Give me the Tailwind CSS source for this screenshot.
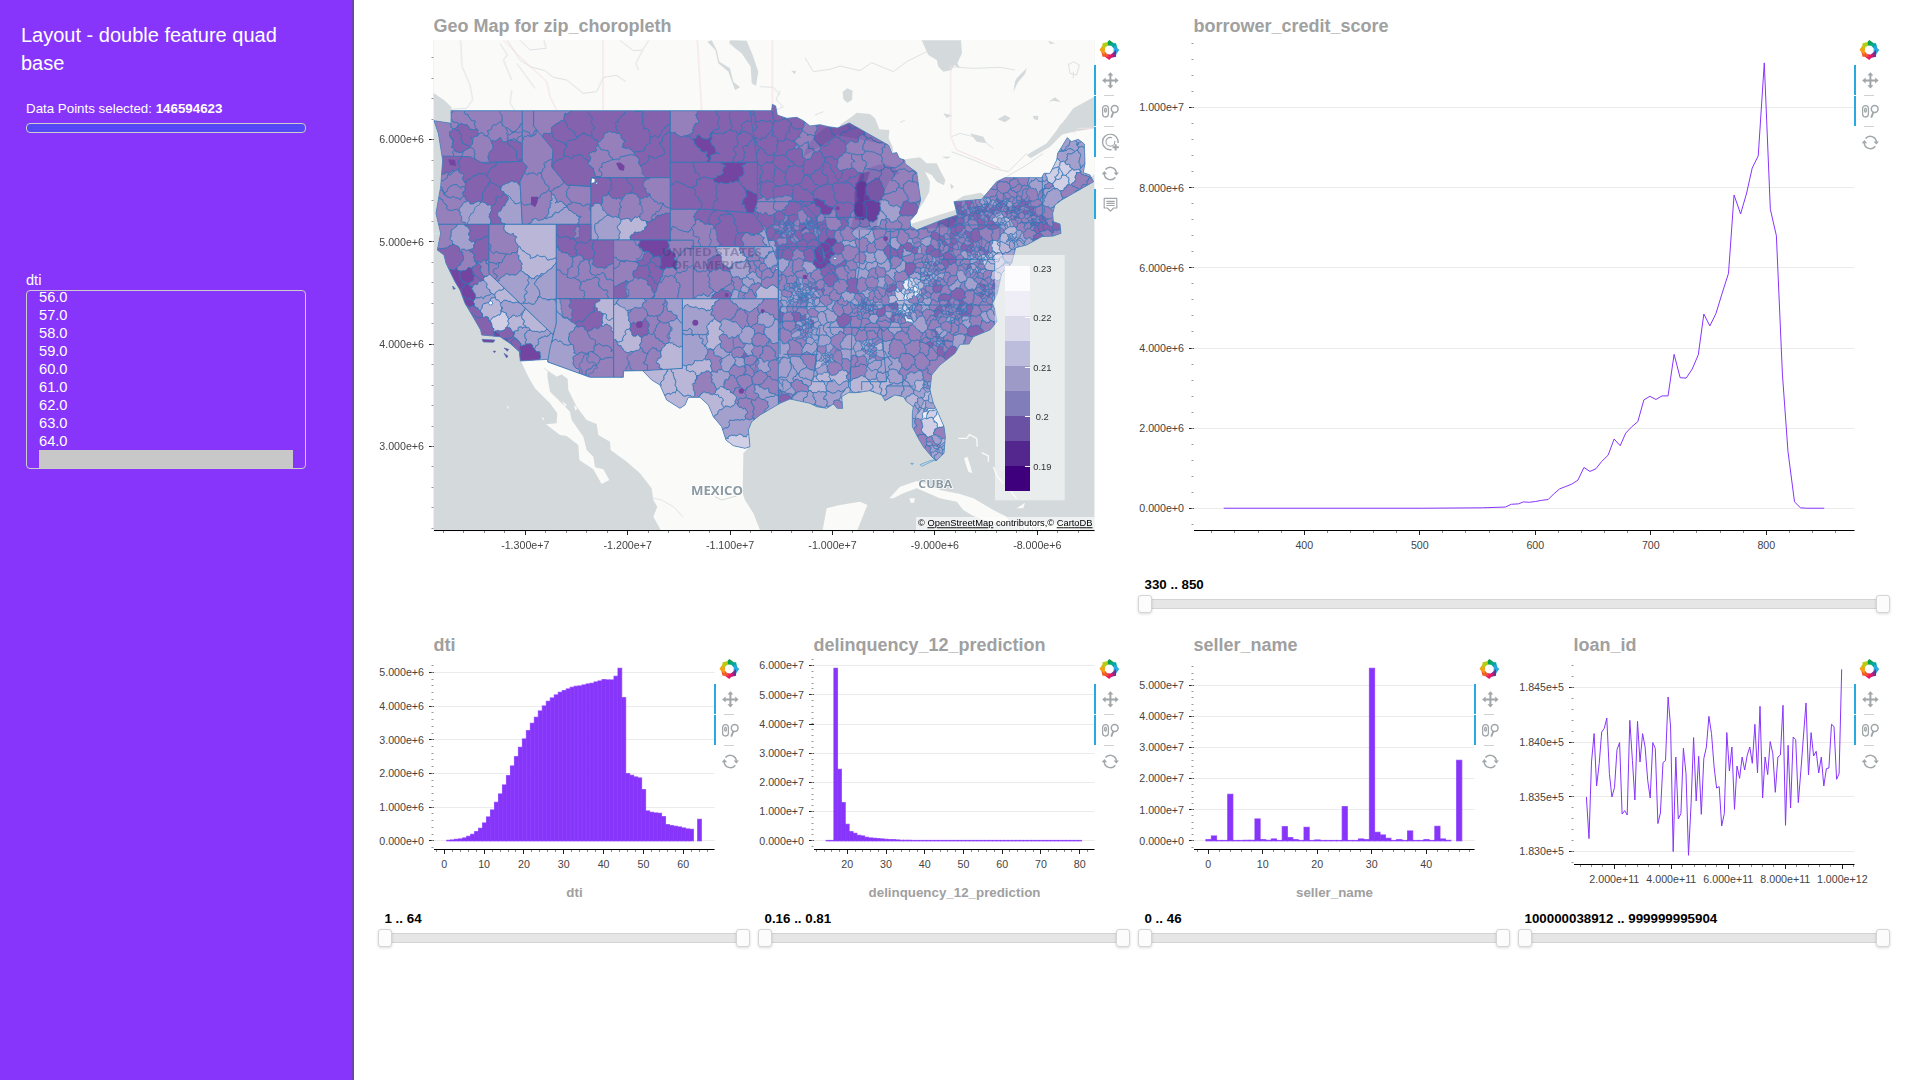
<!DOCTYPE html>
<html lang="en">
<head>
<meta charset="utf-8">
<title>Layout - double feature quad base</title>
<script src="https://cdn.jsdelivr.net/npm/@tailwindcss/browser@4"></script>
</head>
<body class="h-screen w-screen overflow-hidden bg-white font-['Liberation_Sans',Arial,sans-serif]">
<svg class="hidden">
  <symbol id="i-logo" viewBox="-10 -10 20 20">
    <path d="M-4.8-4.8 0-10 4.8-6.6 2-4.2Z" fill="#0aa14b"/>
    <path transform="rotate(45)" d="M-4.8-4.8 0-9.6 4.8-6.6 2-4.2Z" fill="#00a99d"/>
    <path transform="rotate(90)" d="M-4.8-4.8 0-10 4.8-6.6 2-4.2Z" fill="#26aae1"/>
    <path transform="rotate(135)" d="M-4.8-4.8 0-9.6 4.8-6.6 2-4.2Z" fill="#7b2d8e"/>
    <path transform="rotate(180)" d="M-4.8-4.8 0-10 4.8-6.6 2-4.2Z" fill="#ed1566"/>
    <path transform="rotate(225)" d="M-4.8-4.8 0-9.6 4.8-6.6 2-4.2Z" fill="#f15a29"/>
    <path transform="rotate(270)" d="M-4.8-4.8 0-10 4.8-6.6 2-4.2Z" fill="#fb9d14"/>
    <path transform="rotate(315)" d="M-4.8-4.8 0-9.6 4.8-6.6 2-4.2Z" fill="#b5cc12"/>
  </symbol>
  <symbol id="i-pan" viewBox="0 0 18 18">
    <path fill="#a1a6a9" d="M9 .8 12 4.2H10V8H13.8V6L17.2 9 13.8 12V10H10V13.8H12L9 17.2 6 13.8H8V10H4.2V12L.8 9 4.2 6V8H8V4.2H6Z"/>
  </symbol>
  <symbol id="i-wheel" viewBox="0 0 18 18">
    <g fill="none" stroke="#a1a6a9" stroke-width="1.3">
      <rect x="1.2" y="3.2" width="5.8" height="11.4" rx="2.9"/>
      <ellipse cx="4.1" cy="7.8" rx=".9" ry="2"/>
      <circle cx="13.3" cy="6.6" r="3.4" stroke-width="1.5"/>
      <path d="M12 9.8 9.8 15.2" stroke-width="1.9"/>
    </g>
  </symbol>
  <symbol id="i-select" viewBox="0 0 18 18">
    <g fill="none" stroke="#a1a6a9">
      <path d="M10.2 16.2A7.8 7.8 0 1 1 16.6 9.6" stroke-width="1.4"/>
      <circle cx="9" cy="8.4" r="4.4" stroke-width="1.1" stroke-dasharray="22 4" />
      <path d="M14.2 10.8V17M11.1 13.9H17.4" stroke-width="2"/>
    </g>
  </symbol>
  <symbol id="i-reset" viewBox="0 0 18 18">
    <g fill="none" stroke="#a1a6a9" stroke-width="1.5">
      <path d="M4.1 5.2A6.2 6.2 0 0 1 15 8.4"/>
      <path d="M13.9 12.8A6.2 6.2 0 0 1 2.8 9.6"/>
    </g>
    <path fill="#a1a6a9" d="M12.2 8H17.6L14.9 11.2ZM.3 9.8H5.7L3 6.6Z"/>
  </symbol>
  <symbol id="i-hover" viewBox="0 0 18 18">
    <g fill="none" stroke="#a1a6a9" stroke-width="1.2">
      <path d="M2.8 3H15.4V12.6H12.2L9.1 15.8 6 12.6H2.8Z" stroke-linejoin="round"/>
      <path d="M5 5.9H13.3M5 8H13.3M5 10.1H13.3"/>
    </g>
  </symbol>
</svg>

<div class="flex h-full">
  <aside class="flex w-[354px] shrink-0 flex-col border-r-2 border-[#6d45ac] bg-[#8735fb] text-white">
    <h1 class="ml-[21px] mt-[21px] w-[280px] text-[20px] leading-7">Layout - double feature quad base</h1>
    <div class="ml-[26px] mt-[24px] w-[280px]">
      <p class="h-[22px] text-[13.33px] leading-4">Data Points selected: <b>146594623</b></p>
      <div class="h-[10px] rounded-[4px] border border-[#ccc] bg-[#5546f6]"></div>
    </div>
    <div class="ml-[26px] mt-[138px] w-[280px]">
      <p class="h-[19px] text-[14.6px] leading-[18px]">dti</p>
      <div class="flex h-[179px] flex-col justify-end overflow-hidden rounded-[4px] border border-[#ccc] px-3 text-[14.67px] leading-[18px]" id="options">
      </div>
    </div>
  </aside>

  <main class="flex grow flex-col pl-4">
    <section class="flex h-[619px]">
      <article class="flex w-[760px] flex-col">
        <h2 class="h-10 pl-[63.5px] pt-4 text-[18px] leading-5 font-bold text-[#a0a0a0]">Geo Map for zip_choropleth</h2>
        <div class="flex">
          <svg id="map" class="h-[520px] w-[725px] shrink-0 overflow-visible" viewBox="370 40 725 520"></svg>
          <div data-tools="pan,wheel,select,reset-,hover"></div>
        </div>
      </article>
      <article class="flex w-[760px] flex-col">
        <h2 class="h-10 pl-[63.5px] pt-4 text-[18px] leading-5 font-bold text-[#a0a0a0]">borrower_credit_score</h2>
        <div class="flex h-[537px]">
          <svg id="score" class="h-[520px] w-[725px] shrink-0 overflow-visible" viewBox="1130 40 725 520"></svg>
          <div data-tools="pan,wheel,reset-"></div>
        </div>
        <div data-slider="330 .. 850"></div>
      </article>
    </section>
    <section class="flex">
      <article class="flex w-[380px] flex-col">
        <h2 class="h-10 pl-[63.5px] pt-4 text-[18px] leading-5 font-bold text-[#a0a0a0]">dti</h2>
        <div class="flex h-[252px]">
          <svg id="dti" class="h-[250px] w-[345px] shrink-0 overflow-visible" viewBox="370 659 345 250"></svg>
          <div data-tools="pan,wheel,reset-"></div>
        </div>
        <div data-slider="1 .. 64"></div>
      </article>
      <article class="flex w-[380px] flex-col">
        <h2 class="h-10 pl-[63.5px] pt-4 text-[18px] leading-5 font-bold text-[#a0a0a0]">delinquency_12_prediction</h2>
        <div class="flex h-[252px]">
          <svg id="delinquency" class="h-[250px] w-[345px] shrink-0 overflow-visible" viewBox="750 659 345 250"></svg>
          <div data-tools="pan,wheel,reset-"></div>
        </div>
        <div data-slider="0.16 .. 0.81"></div>
      </article>
      <article class="flex w-[380px] flex-col">
        <h2 class="h-10 pl-[63.5px] pt-4 text-[18px] leading-5 font-bold text-[#a0a0a0]">seller_name</h2>
        <div class="flex h-[252px]">
          <svg id="seller" class="h-[250px] w-[345px] shrink-0 overflow-visible" viewBox="1130 659 345 250"></svg>
          <div data-tools="pan,wheel,reset-"></div>
        </div>
        <div data-slider="0 .. 46"></div>
      </article>
      <article class="flex w-[380px] flex-col">
        <h2 class="h-10 pl-[63.5px] pt-4 text-[18px] leading-5 font-bold text-[#a0a0a0]">loan_id</h2>
        <div class="flex h-[252px]">
          <svg id="loan" class="h-[250px] w-[345px] shrink-0 overflow-visible" viewBox="1510 659 345 250"></svg>
          <div data-tools="pan,wheel,reset-"></div>
        </div>
        <div data-slider="100000038912 .. 999999995904"></div>
      </article>
    </section>
  </main>
</div>

<script>
// ---- sidebar list ----
const opts = [];
for (let v = 56; v <= 64; v++) opts.push(`<div class="h-[18px] shrink-0">${v}.0</div>`);
opts.push('<div class="h-[18px] shrink-0 bg-[#c8c8c8]"></div>');
document.getElementById('options').innerHTML = opts.join('');

// ---- toolbars and sliders ----
document.querySelectorAll('[data-tools]').forEach(el => {
  el.className = 'relative z-10 -ml-px flex w-8 shrink-0 flex-col';
  let h = '<svg class="mb-[5px] ml-[5px] h-5 w-5 overflow-visible"><use href="#i-logo" x=".3"/></svg>';
  el.dataset.tools.split(',').forEach((t, i) => {
    const off = t.endsWith('-');
    h += (i ? '<div class="ml-[10px] h-px w-[10px] bg-[#d0d0d0]"></div>' : '') +
      `<div class="flex h-[30px] items-center border-l-2 pl-[5px] ${off ? 'border-transparent' : 'border-[#26aae1]'}"><svg class="h-[18px] w-[18px] overflow-visible"><use href="#i-${t.replace('-', '')}" x=".4" y=".4"/></svg></div>`;
  });
  el.innerHTML = h;
});
document.querySelectorAll('[data-slider]').forEach(el => {
  el.className = 'ml-[14.5px] mr-[7px]';
  const handle = '<div class="-mx-[8px] h-[18px] w-[14px] rounded-[3px] border border-[#d5d5d5] bg-[#fcfcfc] shadow-[0_1px_3px_rgba(0,0,0,0.15)]"></div>';
  el.innerHTML = `<p class="h-[18px] text-[13.33px] leading-4 font-bold text-black">${el.dataset.slider}</p>
    <div class="mt-1 flex h-[10px] items-center justify-between border border-[#d3d3d3] bg-[#e6e6e6]">${handle}${handle}</div>`;
});

// ---- axes ----
function axes(o) {
  let s = '';
  const L = o.left, R = o.right, B = o.bottom;
  o.y.forEach(([t, y]) => {
    if (o.grid) s += `<path d="M${L} ${Math.round(y)}.5H${R}" stroke="#ebebeb"/>`;
    s += `<path d="M${L - 5} ${Math.round(y)}.5H${L}" stroke="#222"/><text x="${L - 10}" y="${y + 4.3}" text-anchor="end">${t}</text>`;
  });
  for (let y = o.y[0][1] + o.ym * 30; y > o.top; y -= o.ym)
    if (y < B) s += `<path d="M${L - 2.5} ${Math.round(y)}.5H${L - .5}" stroke="#999"/>`;
  for (let x = o.x[0][1] - o.xm * 30; x < R; x += o.xm)
    if (x > L) s += `<path d="M${Math.floor(x) + .5} ${B}v2.5" stroke="#888"/>`;
  o.x.forEach(([t, x]) => { s += `<path d="M${Math.floor(x) + .5} ${B}v4.5" stroke="#222"/><text x="${x}" y="${B + 18}" text-anchor="middle">${t}</text>`; });
  s += `<path d="M${L} ${B}H${R}" stroke="#000"/>`;
  return `<g fill="#444" font-size="10.67">${s}</g>`;
}
const ticks = (names, a, d) => names.map((n, i) => [n, a + d * i]);

// line chart: borrower credit score
const score = '186,1284 580,1284 700,1283 745,1281 757,1274 771,1273 781,1268 793,1269 805,1267 817,1264 830,1262 841,1248 853,1235 865,1229 877,1223 889,1213 901,1181 913,1191 925,1184 936,1166 949,1150 961,1109 973,1126 984,1094 996,1078 1008,1065 1020,1010 1032,1001 1044,1009 1056,1000 1068,1000 1080,895 1092,954 1104,955 1116,932 1128,896 1139,793 1151,823 1163,792 1175,742 1188,690 1199,492 1212,540 1224,487 1235,424 1247,393 1259,158 1271,528 1283,595 1295,945 1306,1140 1319,1268 1331,1283 1343,1284 1378,1284';
document.getElementById('score').innerHTML = axes({ left: 1194, right: 1854.5, top: 42, bottom: 530.5, grid: 1,
  y: ticks(['0.000e+0', '2.000e+6', '4.000e+6', '6.000e+6', '8.000e+6', '1.000e+7'], 507.8, -80.15), ym: 16.03,
  x: ticks(['400', '500', '600', '700', '800'], 1304.3, 115.5), xm: 23.1 }) +
  `<polyline fill="none" stroke="#8735fb" transform="translate(1130 .4) scale(.5038 .3955)" vector-effect="non-scaling-stroke" points="${score}"/>`;

// line chart: loan id
const loan = [500,625,395,310,467,400,305,294,263,430,500,472,358,337,551,541,554,270,390,509,273,395,310,350,450,503,337,355,580,548,397,391,200,290,664,380,566,550,354,430,675,520,322,512,378,552,385,350,258,310,410,473,469,587,550,307,422,350,537,407,444,380,419,375,350,399,282,428,228,503,380,433,334,370,486,380,374,225,585,345,533,320,328,517,420,320,218,434,307,377,363,428,380,467,415,413,282,289,447,430,117];
document.getElementById('loan').innerHTML = axes({ left: 1574, right: 1854.5, top: 664, bottom: 864.5, grid: 1,
  y: ticks(['1.830e+5', '1.835e+5', '1.840e+5', '1.845e+5'], 851, -54.67), ym: 10.93,
  x: ticks(['2.000e+11', '4.000e+11', '6.000e+11', '8.000e+11', '1.000e+12'], 1614.3, 57), xm: 11.4 }) +
  `<polyline fill="none" stroke="#8735fb" points="${loan.map((y, i) => (1586.4 + i * 2.553).toFixed(1) + ',' + (630.3 + y / 3).toFixed(1)).join(' ')}"/>`;

// bar charts; heights are in thirds of a pixel
function bars(id, o, vals, x0, w, label) {
  let s = '';
  for (const k in vals) {
    const h = Math.max(vals[k], 1.5) / 3;
    s += `<rect x="${(x0 + k * w - w / 2 + .1).toFixed(2)}" y="${(840.9 - h).toFixed(2)}" width="${(w - .2).toFixed(2)}" height="${h.toFixed(2)}"/>`;
  }
  document.getElementById(id).innerHTML = axes(o) + `<g fill="#8735fb" stroke="#8735fb" stroke-opacity=".75">${s}</g>` +
    `<text x="${o.left + 140.5}" y="897" text-anchor="middle" font-size="13.33" font-weight="bold" fill="#a0a0a0">${label}</text>`;
}
const dti = {};
[2,3,5,6,9,14,20,28,38,54,72,93,116,141,168,196,225,253,281,306,331,353,371,390,405,419,429,438,446,451,456,461,464,465,468,471,473,477,480,484,483,483,494,518,430,202,197,192,189,154,90,86,84,83,73,49,46,44,42,39,36,35].forEach((v, i) => dti[i + 1] = v);
dti[64] = 65;
bars('dti', { left: 434, right: 714.5, top: 665, bottom: 849.5, grid: 1, y: ticks(['0.000e+0', '1.000e+6', '2.000e+6', '3.000e+6', '4.000e+6', '5.000e+6'], 840.3, -33.67), ym: 6.734,
  x: ticks(['0', '10', '20', '30', '40', '50', '60'], 444.3, 39.83), xm: 7.966 }, dti, 444.6, 3.983, 'dti');
const del = {};
for (let i = 15; i <= 80; i++) del[i] = 1;
[518,215,115,50,28,23,17,15,11,9,8,7,6,5,4,4,3,2,2,2].forEach((v, i) => del[17 + i] = v);
bars('delinquency', { left: 814, right: 1094.5, top: 659, bottom: 849.5, grid: 1, y: ticks(['0.000e+0', '1.000e+7', '2.000e+7', '3.000e+7', '4.000e+7', '5.000e+7', '6.000e+7'], 840.3, -29.2), ym: 5.84,
  x: ticks(['20', '30', '40', '50', '60', '70', '80'], 847.3, 38.73), xm: 7.746 }, del, 769.87, 3.873, 'delinquency_12_prediction');
const sel = {};
[4,15,1,1,140,1,1,2,2,66,4,2,6,1,43,10,4,1,41,1,3,1,1,1,1,103,1,1,6,4,518,26,18,8,1,4,1,30,1,1,4,1,44,6,2].forEach((v, i) => sel[i] = v);
sel[46] = 242;
bars('seller', { left: 1194, right: 1474.5, top: 661, bottom: 849.5, grid: 1, y: ticks(['0.000e+0', '1.000e+7', '2.000e+7', '3.000e+7', '4.000e+7', '5.000e+7'], 840.3, -31.07), ym: 6.214,
  x: ticks(['0', '10', '20', '30', '40'], 1208.3, 54.5), xm: 10.9 }, sel, 1208.5, 5.45, 'seller_name');

// ---- choropleth map; map units are thirds of a pixel from x = 420 ----
let seed = 7;
const rnd = () => { seed = (seed * 1664525 + 1013904223) >>> 0; return seed / 4294967296; };
const FILL = ['#7345a0', '#8562ad', '#9580bc', '#a3a0cd', '#bab6d8', '#d0cfe6', '#ecedf6'];
const LINE = '#2f78b8';
const shift = (s, dx, dy) => s.trim().split(/\s+/).map(p => { const [x, y] = p.split(',').map(Number); return [x + dx, y + dy]; });
const US = [
  ...shift('93,332 1055,332 1057,313 1067,318 1072,345', 0, 0),
  ...shift('80,355 110,352 130,362 150,378 180,374 205,380 232,384 268,369 386,436 396,460 410,458 418,475 434,480 436,492 470,517 476,560 482,600 470,640 450,662 452,678 470,690 540,662 592,645 582,605 665,598 710,545 735,533 845,533 852,520 870,520 890,480 893,460 922,413 934,425 955,418 973,432 975,490 970,518 990,525 1001,545 975,560 940,580 905,600 885,615 878,640 880,665 900,672 903,700 880,708 845,710 800,735 767,743 755,790 725,820 712,880 700,905', 1020, 0),
  ...shift('697,70 705,90 711,125 690,150 665,160 640,170 627,192 600,193 585,220 540,255 515,285 510,330 520,370 535,400 552,440 556,470 552,520 528,543 515,530 490,500 475,475 457,440 457,400 460,380 440,365 430,350 405,345 375,362 365,345 330,332 290,338 265,338 245,350 248,385 232,385 220,372 200,385 170,380 150,370 90,357 60,370 0,405', 1020, 840),
  ...shift('995,425 985,450 990,500 975,505 940,497 918,480 905,440 880,410 865,375 840,352 805,352 795,375 780,385 740,360 720,315 695,300 668,272 611,273 610,292 510,292 383,246 383,238 301,243 298,215 270,190 240,170 185,165 182,150 150,95 135,70 120,30 105,5', 0, 840),
  ...shift('95,825 78,790 72,765 52,750 62,700 48,640 62,560 68,480 55,400 42,362 93,370', 0, 0)
];
function hash(a, b, c, d) { let h = (Math.round(a) * 73856093) ^ (Math.round(b) * 19349663) ^ (Math.round(c) * 83492791) ^ (Math.round(d) * 2654435); h = Math.imul(h ^ (h >>> 13), 1274126177); return (((h ^ (h >>> 16)) >>> 0) / 4294967296) * 2 - 1; }
// roughen an edge the same way from whichever side it is walked
function jag(p, q, out) {
  const dx = q[0] - p[0], dy = q[1] - p[1], l = Math.hypot(dx, dy);
  if (l < 6 || l > 400) { out.push(q); return; }
  const sw = p[0] > q[0], a = sw ? q : p, b = sw ? p : q;
  const k = hash(a[0], a[1], b[0], b[1]) * .3 * (sw ? -1 : 1);
  const m = [(p[0] + q[0]) / 2 - dy * k, (p[1] + q[1]) / 2 + dx * k];
  jag(p, m, out); jag(m, q, out);
}
function cells(seeds, box) {
  let out = '';
  seeds.forEach(s => {
    let poly = [[box[0], box[1]], [box[2], box[1]], [box[2], box[3]], [box[0], box[3]]];
    const near = [];
    seeds.forEach(t => { if (t !== s) { const d = (t[0] - s[0]) ** 2 + (t[1] - s[1]) ** 2; if (d > .1) near.push([d, t]); } });
    near.sort((a, b) => a[0] - b[0]);
    for (const [d, t] of near) {
      let r = 0; poly.forEach(p => r = Math.max(r, (p[0] - s[0]) ** 2 + (p[1] - s[1]) ** 2));
      if (d > 4 * r) break;
      const mx = (s[0] + t[0]) / 2, my = (s[1] + t[1]) / 2, nx = t[0] - s[0], ny = t[1] - s[1], np = [];
      poly.forEach((p, i) => {
        const q = poly[(i + 1) % poly.length];
        const a = (p[0] - mx) * nx + (p[1] - my) * ny, b = (q[0] - mx) * nx + (q[1] - my) * ny;
        if (a <= 0) np.push(p);
        if (a * b < 0) { const k = a / (a - b); np.push([p[0] + (q[0] - p[0]) * k, p[1] + (q[1] - p[1]) * k]); }
      });
      poly = np;
    }
    poly = poly.map(p => [Math.round(p[0] * 4) / 4 + .01, Math.round(p[1] * 4) / 4 + .01]);
    const pts = [];
    poly.forEach((p, i) => jag(p, poly[(i + 1) % poly.length], pts));
    out += `<path fill="${FILL[s[2]]}"${s[3] ? ' stroke-width="1.8"' : ''} d="M${pts.map(p => p[0].toFixed(1) + ' ' + p[1].toFixed(1)).join('L')}Z"/>`;
  });
  return out;
}
const anchors = [[1050,380,1],[1140,400,1.6],[1200,430,1],[1340,460,2],[1250,430,1],[1240,550,1],[1220,610,.4],[1330,590,.8],[1100,540,1],[1080,640,1.5],[1190,680,1.3],[1400,520,2],[1460,600,2],[1420,640,2.5],[1300,730,2.2],[1190,760,1],[1150,800,2],[1100,850,2.4],[1250,820,1.6],[1370,760,2.4],[1450,760,2],[1600,730,1.5],[1560,850,2],[1480,868,5],[1450,892,5],[1420,850,2.2],[1450,840,2.2],[1520,845,2.2],[1500,905,2.4],[1700,700,1.6],[1800,650,1.6],[1760,580,2],[1880,560,2.6],[1910,480,5],[1960,450,3],[1980,550,2.2],[1765,690,3.4],[1650,820,2.2],[1700,880,1.8],[1740,800,4.2],[1620,930,1.8],[1680,930,2.6],[1620,980,2.2],[1150,950,2.2],[1220,990,2.8],[1300,930,2],[1400,930,2.1],[1300,1080,2.7],[1450,1080,2.4],[1560,1080,1.8],[1500,1130,2.9],[1280,1150,3.4],[1400,1170,3.5],[1100,1110,2.6],[1130,1180,2.2],[1200,1180,3.3],[1500,1200,3.4],[1520,1270,5.2],[1480,1300,2.5],[1540,1350,3]];
function level(x, y) {
  let best = 1e9, v = 2;
  anchors.forEach(a => { const d = Math.hypot(a[0] - x, a[1] - y); if (d < best) { best = d; v = a[2]; } });
  const n = y < 600 ? .8 : 1.7;
  return Math.max(0, Math.min(6, Math.round(v + (rnd() - .5) * n)));
}
const east = [];
for (let y = 290; y < 1400; ) {
  const st = y < 640 ? 48 : y < 1000 ? 31 : 37;
  for (let x = 985; x < 2030; x += st) {
    const px = x + (rnd() - .5) * st * .95, py = y + (rnd() - .5) * st * .95;
    if (py > 960 && rnd() < .12) continue;
    east.push([px, py, level(px, py)]);
    if (x > 1640 && y < 640) east.push([px + 20, py + 18, level(px, py)]);
  }
  y += st;
}
const clusters = [[1100,690,30,34,54],[1175,678,26,18,42],[1035,785,26,34,28],[1155,870,44,24,54],[1140,900,44,20,40],[1160,985,28,34,45],[1335,925,36,22,38],[1450,935,40,18,38],[1600,940,48,24,50],[1350,1050,28,26,34],[1550,1020,30,20,30],[1225,1075,26,26,26],[1740,635,62,44,95],[1640,635,46,20,50],[1540,815,32,42,50],[1720,870,38,28,44],[1680,760,46,26,36],[1480,875,44,24,28],[1820,620,30,36,22],[1850,660,36,22,22],[1600,720,60,30,24],[1780,720,24,14,18],[1510,1225,24,14,12],[1560,1345,14,22,14],[1085,1180,14,14,10],[1510,1165,12,14,8],[1660,810,30,24,18],[1490,760,24,34,8],[1380,870,50,30,10]];
clusters.forEach(([x, y, rx, ry, n]) => { for (let i = 0; i < n; i++) { const a = rnd() * 6.283, r = Math.sqrt(rnd()), px = x + Math.cos(a) * r * rx, py = y + Math.sin(a) * r * ry; east.push([px, py, level(px, py), 1]); } });

const states = [
  ['787,896 1075,896 1075,1400 600,1400 600,1112 787,1105', [[830,905,4],[830,950,3],[850,1000,3],[880,1010,4],[820,1060,3],[860,1150,2],[790,1140,4],[740,1150,4],[760,1200,4],[700,1130,4],[840,1110,4],[930,930,2],[930,1030,2],[920,1080,3],[960,960,2],[990,900,3],[1000,950,2],[1040,930,2],[1050,990,3],[980,1010,3],[1010,1050,2],[960,1110,2],[900,1140,3],[960,1180,2],[1000,1180,2],[1040,1150,2],[1060,1110,2],[880,1220,4],[940,1240,3],[960,1290,3],[920,1190,4],[965,1335,5],[1010,1210,2],[1050,1220,3],[1040,1060,2],[985,1080,2],[975,1070,1],[1000,1100,2],[940,990,3],[1020,990,2],[890,1080,2],[905,1060,3],[1025,1100,3],[960,1060,2],[1060,1040,2],[975,1145,2],[1020,1130,2],[940,1160,2],[985,1215,2],[1025,1175,3],[960,1085,3],[985,1110,2],[1020,1020,2],[960,1030,2],[985,1050,3],[1030,960,3]]],
  ['30,332 307,332 307,484 190,487 120,505 40,470', [[100,350,2],[60,390,2],[140,360,2],[210,370,2],[275,370,2],[95,440,2],[135,408,1],[185,445,2],[240,450,1],[285,400,2],[290,440,1],[150,480,2],[240,400,2],[280,390,2],[292,412,2],[120,420,1]]],
  ['30,465 66,468 150,470 190,490 307,484 322,500 300,545 307,673 30,673', [[80,500,2],[95,485,1],[100,540,2],[100,600,2],[80,650,2],[150,515,1],[250,520,1],[170,570,1],[165,640,3],[200,640,3],[245,620,1],[290,610,3],[285,560,3],[100,580,2],[215,590,1]]],
  ['307,332 341,332 341,378 400,440 395,500 440,555 513,560 513,673 307,673 300,545 322,500 307,484', [[322,370,2],[340,430,2],[370,470,2],[340,560,2],[360,610,2],[410,530,2],[405,620,3],[420,650,3],[480,590,2],[470,640,2],[440,580,2]]],
  ['341,332 751,332 751,533 515,533 512,558 440,555 395,500 400,450 341,378', [[395,360,2],[400,430,1],[470,370,1],[480,450,1],[560,370,1],[590,450,2],[600,500,2],[550,490,2],[460,510,1],[690,370,1],[700,450,1],[650,400,1],[725,500,1],[430,400,1]]],
  ['513,533 751,533 751,720 513,720', [[530,580,1],[600,560,1],[668,560,1],[720,570,2],[535,650,3],[570,690,3],[580,610,2],[640,685,4],[690,620,2],[735,650,2],[710,700,1],[630,620,2]]],
  ['30,673 207,673 207,820 400,1005 383,1100 30,1100', [[75,700,2],[130,715,3],[190,700,1],[90,780,1],[140,790,2],[185,760,1],[110,840,0],[140,880,0],[210,790,2],[160,830,1],[185,870,3],[220,850,4],[260,880,4],[215,930,4],[240,960,5],[190,900,3],[150,950,1],[130,910,0],[180,985,1],[340,960,4],[270,930,3],[340,1020,3],[370,1050,3],[318,1058,0],[260,1010,1],[305,1010,3],[290,970,4],[150,825,0],[175,815,1],[195,800,2],[255,1020,0],[275,1030,1],[268,1018,1]]],
  ['207,673 409,673 409,970 400,1005 207,820', [[240,730,2],[260,800,2],[355,715,4],[340,785,4],[340,860,3],[380,870,3],[280,850,3],[222,770,2],[390,930,3],[215,790,2],[365,925,3]]],
  ['409,673 513,673 513,720 581,720 581,896 409,896', [[440,700,1],[485,700,1],[450,740,1],[500,745,1],[540,750,1],[435,790,2],[490,815,2],[545,795,2],[440,860,2],[520,870,2],[560,850,2],[465,800,2]]],
  ['409,896 581,896 581,1132 510,1132 383,1086 390,1045 400,1005 409,970', [[420,920,3],[485,920,1],[520,960,1],[562,910,4],[572,960,4],[425,1010,3],[430,1060,3],[490,1030,2],[540,1010,2],[550,1060,2],[500,1090,2],[550,1110,2],[510,1090,2]]],
  ['581,720 820,720 820,896 581,896', [[620,750,2],[670,750,1],[705,735,0],[742,785,0],[720,815,1],[780,760,2],[610,810,2],[680,840,1],[640,870,2],[600,870,1],[750,860,2],[790,850,2],[590,770,2],[800,790,2],[728,800,1],[735,820,2]]],
  ['581,896 787,896 787,1105 668,1112 610,1113 610,1132 581,1132', [[610,910,3],[600,960,4],[655,950,2],[630,1025,4],[700,920,2],[740,940,2],[770,920,3],[620,1080,2],[660,1080,2],[695,1030,2],[705,1080,2],[760,990,3],[755,1070,4],[690,970,2],[640,900,3],[665,975,1],[730,990,2]]],
  ['751,332 990,332 1003,420 1012,487 751,487', [[775,370,2],[830,380,1],[850,440,0],[910,360,1],[960,360,1],[990,380,1],[790,450,1],[920,430,1],[980,440,1],[1000,450,1]]],
  ['751,487 1012,487 1012,605 1000,640 860,628 751,628', [[800,520,1],[925,515,0],[860,490,1],[780,590,1],[860,580,1],[930,580,1],[990,520,1],[990,600,0]]],
  ['751,628 860,628 1000,640 1035,690 1050,740 820,740 820,720 751,720', [[790,660,2],[850,690,2],[790,710,2],[880,650,1],[920,690,1],[970,665,1],[1005,680,1],[860,650,1],[1040,690,3],[1010,720,3],[990,730,2],[970,735,1]]],
  ['820,740 1056,740 1075,790 1075,896 820,896', [[850,770,2],[850,850,2],[900,790,1],[950,768,4],[970,810,3],[900,840,2],[1000,865,2],[850,890,3],[930,870,2],[1030,800,2],[1035,882,4],[1010,770,2],[1000,750,2],[1020,760,3],[1000,800,2],[1015,790,2],[1030,780,2],[1045,790,3],[1010,815,2],[1040,820,2],[1060,810,2],[960,860,2],[975,870,3],[985,880,2],[945,885,3],[990,850,3],[970,885,2],[1000,840,3],[1050,850,2],[925,885,1]]]
];
const usPts = US.map(p => p.join(',')).join(' ');
let defs = `<clipPath id="us"><polygon points="${usPts}"/></clipPath><clipPath id="frame"><rect x="40" y="120" width="1984" height="1474"/></clipPath>`;
let land = `<polygon points="${usPts}" fill="${FILL[2]}"/><g>${cells(east, [900, 250, 2060, 1440])}</g>`;
states.forEach(([poly, s], i) => {
  defs += `<clipPath id="st${i}"><polygon points="${poly}"/></clipPath>`;
  const b = poly.split(' ').map(p => p.split(',').map(Number)), xs = b.map(p => p[0]), ys = b.map(p => p[1]);
  land += `<g clip-path="url(#st${i})"><polygon points="${poly}" fill="${FILL[2]}"/>${cells(s, [Math.min(...xs) - 120, Math.min(...ys) - 120, Math.max(...xs) + 120, Math.max(...ys) + 120])}</g><polygon fill="none" points="${poly}"/>`;
});
const off = (dx, dy, s) => `<g transform="translate(${dx} ${dy})">${s}</g>`;
const base = `<rect x="40" y="120" width="1984" height="1480" fill="#d4dadc"/>
  <path fill="#fafaf8" d="M40 120H2025V290L1960 340 1920 375 1900 410 1960 395 2025 385V520L1990 560H1900L1700 700H40V370L95 372 90 340 60 315 40 300Z"/>
  <g fill="#d4dadc"><path d="M40 278 72 300 95 322 93 345 70 325 40 302ZM930 121 980 122 998 165 1015 215 1008 258 995 250 992 200 965 160 945 145 928 130ZM875 121 890 150 898 185 930 205 940 245 960 262 945 270 925 215 895 190 886 150 862 125ZM40 362 93 372 130 700 40 700Z"/>` +
  off(1020, 0, `<path d="M485 121H603L606 160 592 190 600 205 582 195 575 210 550 215 535 200 530 180 505 165ZM240 375 275 350 290 338 330 342 345 355 358 388 388 390 386 415 398 440 400 455 350 440 260 400ZM435 478 480 472 500 490 530 490 540 510 556 540 552 556 530 545 515 525 495 515 510 545 508 575 492 605 478 625 465 640 455 560 440 500ZM452 672 520 650 592 628 600 650 470 695ZM582 605 610 588 662 578 680 590 670 605ZM1003 290 940 325 905 372 860 430 800 465 812 475 870 440 905 405 960 355 1003 325ZM248 275 262 265 278 272 276 300 262 308 250 298ZM770 235 800 205 795 222 775 245 760 275 765 245ZM713 358 735 345 752 355 735 367ZM866 305 885 292 902 306 880 302ZM630 400 670 410 680 430 650 425ZM818 348 835 347 834 360 822 358ZM94 212 108 213 104 223ZM550 340 576 346 560 354ZM545 470 573 470 560 476ZM865 122 885 130 870 132ZM570 550 582 560 574 568Z"/>`) + `</g>
  <g fill="none" stroke="#d4dadc" stroke-width="3" opacity=".75"><path d="M122 121 126 200 150 255 158 300 140 325 95 328M240 130 262 165 250 180 275 240M290 190 345 265M262 121 300 180 330 200 375 212 400 232 440 240 490 280 530 275 550 232 590 226 617 245M600 121 640 152 668 150 686 121M668 150 648 190 655 210M372 121 378 145 330 150 300 121M275 270 270 310 285 332M1020 260 1060 262 1080 285"/>` +
  off(1020, 0, `<path d="M135 173 160 215 210 208 240 198 300 212 335 188 400 215 440 185 510 150M573 200 640 205 720 202 765 210M60 272 48 300 70 320 50 330M165 345 190 335M575 410 600 400 660 415 700 445M575 455 640 480 700 505 745 515 800 460M740 530 800 495 850 460M925 190 930 220 950 225 958 195 940 185 925 195M940 215V235M420 368 435 360"/>`) + `</g>
  <g fill="none" stroke="#f3dfe0" stroke-width="3"><path d="M549 121V332M832 121 845 332M1057 121V313M250 121 300 170 380 245 390 290 410 330"/>` + off(1020, 0, `<path d="M572 195V410L590 450 720 505M1003 385 955 385 940 400"/>`) + `</g>` +
  off(0, 840, `<g fill="#fafaf8"><path d="M383 230 372 265 410 290 425 283 443 297 445 330 470 380 500 420 530 432 535 465 570 485 572 510 620 545 660 580 695 625 700 660 712 680 700 710 725 755H1022L1000 700 975 660 968 640 970 520 988 500 900 300 600 230Z"/><path d="M301 240 325 290 345 325 390 370 412 400 410 430 378 433 420 465 440 468 475 495 478 540 520 568 545 612 568 600 550 568 525 562 520 530 500 510 490 470 455 420 450 395 410 355 390 335 382 290 385 230ZM426 362 440 375 435 380ZM462 375 472 385 466 392ZM366 410 373 418 368 420ZM262 376 268 386 262 384Z"/></g><path d="M372 265 410 290M700 655 725 660 760 680 790 712" fill="none" stroke="#e2e5e5" stroke-width="3"/><path d="M885 650 905 660 950 648" fill="none" stroke="#d4dadc" stroke-width="3"/>`) +
  off(1020, 840, `<g fill="#fafaf8"><path d="M187 755 200 685 240 675 300 665 322 675 310 705 290 755ZM388 655 420 620 470 603 500 612 540 630 600 642 640 655 700 690 740 710 750 730 690 725 640 708 610 690 590 665 540 655 470 625 430 640 400 655ZM448 655 465 655 462 668 452 668ZM612 535 622 530 632 560 637 580 625 575ZM770 685 795 668 790 685ZM770 750 800 728 870 725 960 745V755Z"/></g><path d="M595 475H620L628 464 650 475 652 500M665 518 685 528 685 545M700 560 712 590 730 610M750 632 770 655" stroke="#fafaf8" stroke-width="4" fill="none"/>`);

const over = `<g fill="${FILL[0]}" stroke="none">
   <path d="M588 490 600 487 614 498 612 512 598 510ZM333 590 355 590 352 608 345 622 333 612ZM85 478 105 480 108 498 90 495Z"/>
   <path d="M1195 738 1205 740 1212 780 1205 792 1190 785 1182 750Z" stroke="${LINE}"/><circle cx="1253" cy="625" r="6"/><circle cx="1155" cy="831" r="7"/><circle cx="1397" cy="716" r="7"/><circle cx="658" cy="974" r="10"/><circle cx="826" cy="968" r="9"/><circle cx="964" cy="1173" r="8"/><circle cx="1028" cy="933" r="6"/><circle cx="920" cy="885" r="6"/></g>
   <g fill="#3a1d86" opacity=".16" stroke="none"><path d="M1150 470C1170 400 1240 360 1290 365L1410 436 1330 420 1250 405 1200 440ZM1330 520C1370 480 1420 490 1440 520 1400 530 1380 600 1370 690H1290C1310 640 1300 560 1330 520ZM1460 690 1620 640 1600 680Z"/></g>
   <path d="M1320 520 1350 515 1335 560 1328 620 1330 660H1305L1303 580Z" fill="#5c2e91" opacity=".4" stroke="none"/>
   <g fill="#fff"><path d="M515 533 526 538 524 548 513 550Z"/><circle cx="530" cy="550" r="3"/><circle cx="212" cy="909" r="6"/><circle cx="1245" cy="775" r="4"/><circle cx="1070" cy="805" r="3"/></g>
   <g fill="none" stroke-width="2.6"><path d="M1012 605H1190M1075 740H1185L1200 760M1212 652H1330M1318 690V800L1310 850M1411 690V800M1340 687H1460M1558 665V778H1735M1600 675H1760M1300 915H1715M1220 982H1465M1384 982 1400 1145H1325V1170M1296 982 1290 1178M1090 1063H1195M1080 920V1063M1080 920H1215M1400 1158H1480M1075 740V920M1140 600 1190 652 1200 760 1260 850M1867 520V660M1740 670V740M1800 668H1880M1178 1145H1240M1200 980 1190 1063 1178 1145"/></g>`;
const scale = ['#fcfbfd', '#efedf5', '#dadaeb', '#bcbddc', '#9e9ac8', '#807dba', '#6a51a3', '#54278f', '#3f007d'];
const legend = `<rect x="995" y="255" width="69.7" height="245.3" fill="#fff" opacity=".5"/>` +
  scale.map((c, i) => `<rect x="1005" y="${266 + 25 * i}" width="25" height="25" fill="${c}"/>`).join('') +
  [['0.23', 269], ['0.22', 317.5], ['0.21', 367.5], ['0.2', 416.5], ['0.19', 466.5]].map(([t, y], i) => (i ? `<path d="M1025 ${y}h5" stroke="#fff"/>` : '') + `<text x="1042.3" y="${y + 3.3}" text-anchor="middle" font-size="9.33" fill="#333">${t}</text>`).join('');
document.getElementById('map').innerHTML = `<defs>${defs}</defs>
  <g transform="translate(420 0) scale(.333333)"><g clip-path="url(#frame)">${base}
    <g clip-path="url(#us)" stroke="${LINE}" stroke-width="2.3" stroke-linejoin="round">${land}${over}</g>
    <polygon points="${usPts}" fill="none" stroke="#4f86bd" stroke-width="2.5" stroke-linejoin="round"/>
    <g fill="#7345a0" stroke="#4f77b5" stroke-width="2"><path d="M186 1018 225 1020 220 1027 190 1026ZM252 1044 266 1048 262 1054ZM252 1060 264 1068 260 1074ZM219 1054 227 1053 224 1058ZM98 858 106 866 100 868Z"/></g>
    <path d="M1500 1394 1530 1382 1545 1380 1520 1392 1505 1399ZM1472 1390 1480 1390 1477 1394Z" fill="#c8d4e6" stroke="#4f9ac4" stroke-width="2"/>
    <g font-family="Open Sans, sans-serif" font-weight="bold">
      <g fill="#43306f" opacity=".36" font-size="29"><text x="725" y="768" textLength="300" lengthAdjust="spacingAndGlyphs">UNITED STATES</text><text x="755" y="808" textLength="240" lengthAdjust="spacingAndGlyphs">OF AMERICA</text></g>
      <g fill="#8b9aa4" font-size="35" stroke="#fff" stroke-width="4" paint-order="stroke"><text x="813" y="1485" textLength="156" lengthAdjust="spacingAndGlyphs">MEXICO</text><text x="1495" y="1464" font-size="33" textLength="102" lengthAdjust="spacingAndGlyphs">CUBA</text><text x="1795" y="1600" font-size="26" opacity=".5">HAITI</text></g>
    </g></g></g>${legend}
  <rect x="916" y="517" width="178.5" height="13" fill="#fff" opacity=".62"/>
  <text x="918" y="526.3" font-size="9.33" fill="#000" textLength="174.5">© <tspan text-decoration="underline">OpenStreetMap</tspan> contributors,© <tspan text-decoration="underline">CartoDB</tspan></text>` +
  axes({ left: 434, right: 1094.5, top: 50, bottom: 530.5,
    y: ticks(['3.000e+6', '4.000e+6', '5.000e+6', '6.000e+6'], 446, -102.3), ym: 20.46,
    x: ticks(['-1.300e+7', '-1.200e+7', '-1.100e+7', '-1.000e+7', '-9.000e+6', '-8.000e+6'], 525.3, 102.4), xm: 20.48 });
</script>
</body>
</html>
